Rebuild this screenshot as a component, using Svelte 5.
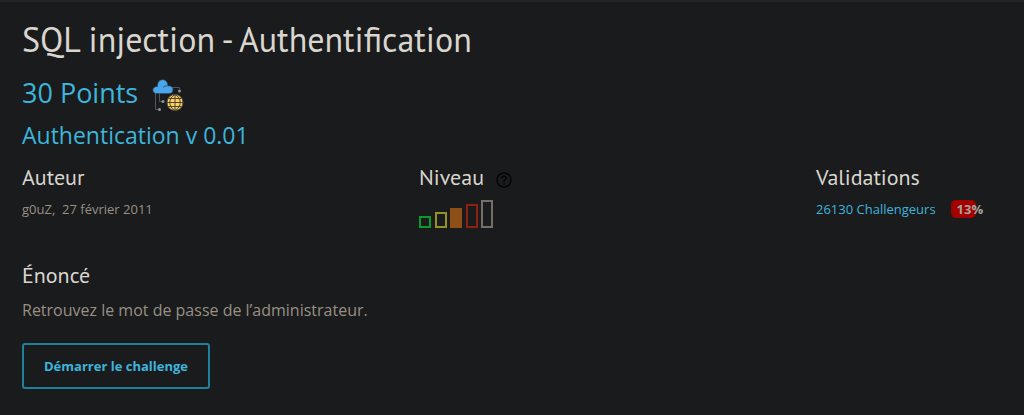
<script>
  const levels = [
    { name: 'Très facile', color: '#0a9a2b', height: 12 },
    { name: 'Facile', color: '#96911f', height: 16 },
    { name: 'Moyen', color: '#8f4f18', height: 20, active: true },
    { name: 'Difficile', color: '#8e2012', height: 24 },
    { name: 'Très difficile', color: '#776f65', height: 28 }
  ];
</script>

<main>
  <h1>SQL injection - Authentification</h1>
  <div class="points">
    <h2>30 Points</h2>
    <svg width="34" height="34" viewBox="0 0 34 34" aria-hidden="true">
      <g fill="none" stroke="#51565c" stroke-width="1">
        <path d="M5.500 14v16.500h3M9.500 14v8.500h3M20 8.500h9.500v2" />
      </g>
      <path d="M5.500 14.500a3.500 3.500 0 0 1 0-6.800q1-.200 2 0C7.300 3.500 9.300.700 12.500.700s5.300 2.300 5.300 6.300l1.500-.100c2.200 0 3.700 1.600 3.700 3.800s-1.500 3.800-3.700 3.800z" fill="#48a6ee" stroke="#36414c" stroke-width=".6" />
      <path d="M13 8.500a4 4 0 0 1 4-1.500" fill="none" stroke="#36414c" stroke-width=".8" />
      <g fill="#8d939a">
        <circle cx="9.500" cy="30.500" r="1.500" />
        <circle cx="13" cy="22.500" r="1.500" />
        <circle cx="29.500" cy="12" r="1.500" />
      </g>
      <circle cx="25" cy="23.500" r="8" fill="#ffd05c" stroke="#514e49" />
      <path d="M25 15.500v16M17 23.500h16M18.500 19.500h13M18.500 27.500h13M25 15.500c-7 4-7 12 0 16M25 15.500c7 4 7 12 0 16" fill="none" stroke="#4b4437" />
    </svg>
  </div>
  <h3>Authentication v 0.01</h3>

  <div class="details">
    <section>
      <h4>Auteur</h4>
      <p class="small">g0uZ,&nbsp; 27 février 2011</p>
    </section>
    <section>
      <div class="level-title">
        <h4>Niveau</h4>
        <svg width="16" height="16" viewBox="0 0 16 16" aria-hidden="true">
          <g fill="none" stroke="#050505" stroke-width="1.500">
            <circle cx="8" cy="8" r="7" />
            <path d="M5.700 6.500C5.700 5 6.600 4.200 8 4.200s2.300.800 2.300 2C10.300 8 8 7.900 8 9.700M8 10.800v1.400" />
          </g>
        </svg>
      </div>
      <div class="levels">
        {#each levels as level}
          <span
            class="bar"
            class:active={level.active}
            style="height: {level.height}px; color: {level.color}"
          ></span>
        {/each}
      </div>
    </section>
    <section class="validations">
      <h4>Validations</h4>
      <p class="small score">
        <a href="#challengers">26130 Challengeurs</a>
        <span class="meter">13%</span>
      </p>
    </section>
  </div>

  <section>
    <h4>Énoncé</h4>
    <p class="statement">Retrouvez le mot de passe de l’administrateur.</p>
  </section>
  <button type="button">Démarrer le challenge</button>
</main>

<style>
  :global(body) {
    margin: 0;
    background: #1a1b1c;
  }
  main {
    border-top: 2px solid #242526;
    padding: 15px 22px 26px;
    color: #989084;
    font-family: "Open Sans", "Noto Sans", sans-serif;
  }
  h1, h2, h3, h4, p {
    margin: 0;
    font-weight: 400;
  }
  h1, h4 {
    color: #d9d5cf;
    font-family: "PT Sans", "Noto Sans", sans-serif;
  }
  h1 {
    font-size: 34px;
    line-height: 44px;
  }
  .points {
    display: flex;
    align-items: center;
    gap: 12px;
    height: 40px;
    margin-top: 12px;
  }
  h2, h3 {
    color: #3db5dc;
  }
  h2 {
    font-size: 27px;
    line-height: 40px;
  }
  .points svg {
    margin-top: 6px;
  }
  h3 {
    margin-top: 6px;
    font-size: 23px;
    line-height: 32px;
  }
  .details {
    display: flex;
    height: 98px;
    margin-top: 10px;
  }
  .details section {
    flex: 1;
  }
  .details .validations {
    flex: 0 0 186px;
  }
  h4 {
    font-size: 22px;
    line-height: 32px;
  }
  .level-title {
    display: flex;
    align-items: center;
    gap: 12px;
  }
  .level-title svg {
    margin-top: 6px;
  }
  .small {
    font-size: 13px;
    line-height: 32px;
  }
  .levels {
    display: flex;
    align-items: flex-end;
    justify-content: space-between;
    width: 74px;
    height: 28px;
    margin-top: 7px;
  }
  .bar {
    box-sizing: border-box;
    width: 12px;
    border: 2px solid currentColor;
  }
  .active {
    background: currentColor;
  }
  .score {
    display: flex;
    align-items: center;
    gap: 15px;
  }
  a {
    color: #3db5dc;
    text-decoration: none;
  }
  .meter {
    box-sizing: border-box;
    width: 25px;
    height: 18px;
    padding-left: 6px;
    border-radius: 5px;
    background: #a30000;
    color: #aaa297;
    font-weight: 700;
    line-height: 18px;
  }
  .statement {
    font-size: 16px;
    line-height: 38px;
  }
  button {
    margin-top: 14px;
    padding: 0 20px;
    border: 2px solid #1f7f9c;
    border-radius: 3px;
    background: transparent;
    color: #3db5dc;
    font: 700 13px/42px "Open Sans", "Noto Sans", sans-serif;
    cursor: pointer;
  }
</style>
